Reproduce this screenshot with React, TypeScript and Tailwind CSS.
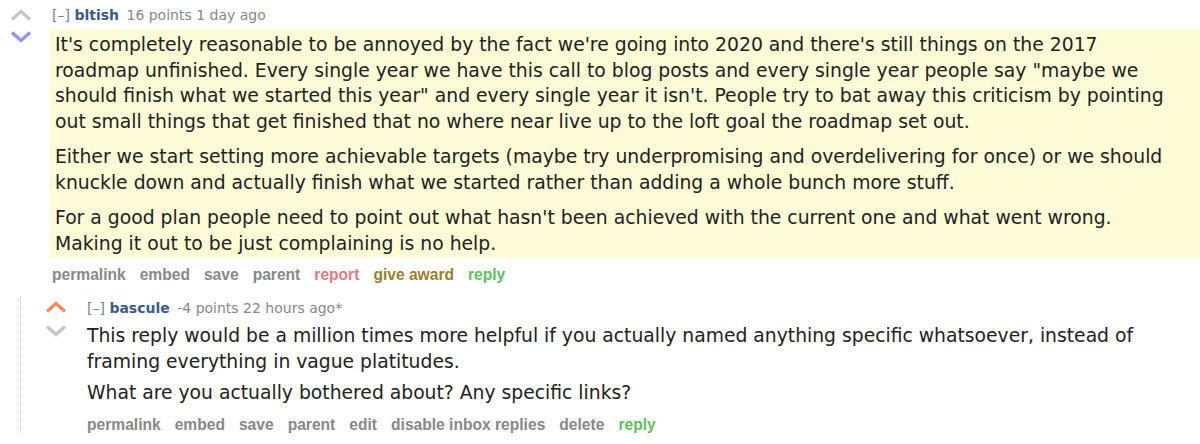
import React from 'react';

const verdana = "font-['DejaVu_Sans',Verdana,sans-serif]";
const helv = "font-['Liberation_Sans',Arial,sans-serif]";

function Chevron({ dir, color }: { dir: 'up' | 'down'; color: string }) {
  return (
    <svg width="22" height="12" viewBox="0 0 22 12" className="block">
      <path
        d={dir === 'up' ? 'M2 10.5 L11 2.5 L20 10.5' : 'M2 1.5 L11 9.5 L20 1.5'}
        fill="none"
        stroke={color}
        strokeWidth="3.4"
        strokeLinecap="butt"
        strokeLinejoin="miter"
      />
    </svg>
  );
}

function Actions({ items }: { items: { label: string; color?: string }[] }) {
  return (
    <div className={`flex gap-[14px] text-[15.6px] font-bold leading-[18px] ${helv}`}>
      {items.map((it) => (
        <span key={it.label} className={it.color ?? 'text-[#888888]'}>
          {it.label}
        </span>
      ))}
    </div>
  );
}

export default function App() {
  return (
    <div className="w-[1200px] h-[444px] overflow-hidden bg-white text-[#222222]">
      {/* parent comment */}
      <div className="flex">
        <div className="w-[50px] shrink-0 flex flex-col items-start pt-[9px] pl-[10px] gap-[10px]">
          <Chevron dir="up" color="#c6c6c6" />
          <Chevron dir="down" color="#9494ff" />
        </div>
        <div className="flex-1 min-w-0">
          <div className={`pl-[2px] pt-[6px] h-[29px] text-[14px] leading-[18px] ${verdana} whitespace-nowrap`}>
            <span className="text-[#6d84a8]">[–]</span>{' '}
            <span className="font-bold text-[#3b5b8c]">bltish</span>{' '}
            <span className="text-[#888888] ml-[3px]">16 points 1 day ago</span>
          </div>
          <div className={`bg-[#fefcd7] pl-[5px] pt-[3px] pb-[1px] text-[18.8px] leading-[25.7px] ${verdana} flex flex-col gap-[9.5px] whitespace-nowrap`}>
            <p>
              It's completely reasonable to be annoyed by the fact we're going into 2020 and there's still things on the 2017
              <br />
              roadmap unfinished. Every single year we have this call to blog posts and every single year people say "maybe we
              <br />
              should finish what we started this year" and every single year it isn't. People try to bat away this criticism by pointing
              <br />
              out small things that get finished that no where near live up to the loft goal the roadmap set out.
            </p>
            <p>
              Either we start setting more achievable targets (maybe try underpromising and overdelivering for once) or we should
              <br />
              knuckle down and actually finish what we started rather than adding a whole bunch more stuff.
            </p>
            <p>
              For a good plan people need to point out what hasn't been achieved with the current one and what went wrong.
              <br />
              Making it out to be just complaining is no help.
            </p>
          </div>
          <div className="pl-[2px] pt-[8px] h-[36px]">
            <Actions
              items={[
                { label: 'permalink' },
                { label: 'embed' },
                { label: 'save' },
                { label: 'parent' },
                { label: 'report', color: 'text-[#e07a82]' },
                { label: 'give award', color: 'text-[#9b7f2e]' },
                { label: 'reply', color: 'text-[#5dbf5d]' },
              ]}
            />
          </div>
        </div>
      </div>

      {/* child comment */}
      <div className="ml-[20px] mt-[2px] border-l border-dotted border-[#c8cde6] flex">
        <div className="w-[66px] shrink-0 flex flex-col items-start pt-[5px] pl-[24px] gap-[12px]">
          <Chevron dir="up" color="#ff8b60" />
          <Chevron dir="down" color="#c6c6c6" />
        </div>
        <div className="flex-1 min-w-0">
          <div className={`pt-[3px] h-[27px] text-[14px] leading-[18px] ${verdana} whitespace-nowrap`}>
            <span className="text-[#6d84a8]">[–]</span>{' '}
            <span className="font-bold text-[#3b5b8c]">bascule</span>{' '}
            <span className="text-[#888888] ml-[3px]">-4 points 22 hours ago*</span>
          </div>
          <div className={`text-[18.75px] leading-[26px] ${verdana} flex flex-col gap-[5px] whitespace-nowrap`}>
            <p>
              This reply would be a million times more helpful if you actually named anything specific whatsoever, instead of
              <br />
              framing everything in vague platitudes.
            </p>
            <p>What are you actually bothered about? Any specific links?</p>
          </div>
          <div className="pt-[10px]">
            <Actions
              items={[
                { label: 'permalink' },
                { label: 'embed' },
                { label: 'save' },
                { label: 'parent' },
                { label: 'edit' },
                { label: 'disable inbox replies' },
                { label: 'delete' },
                { label: 'reply', color: 'text-[#5dbf5d]' },
              ]}
            />
          </div>
        </div>
      </div>
    </div>
  );
}
